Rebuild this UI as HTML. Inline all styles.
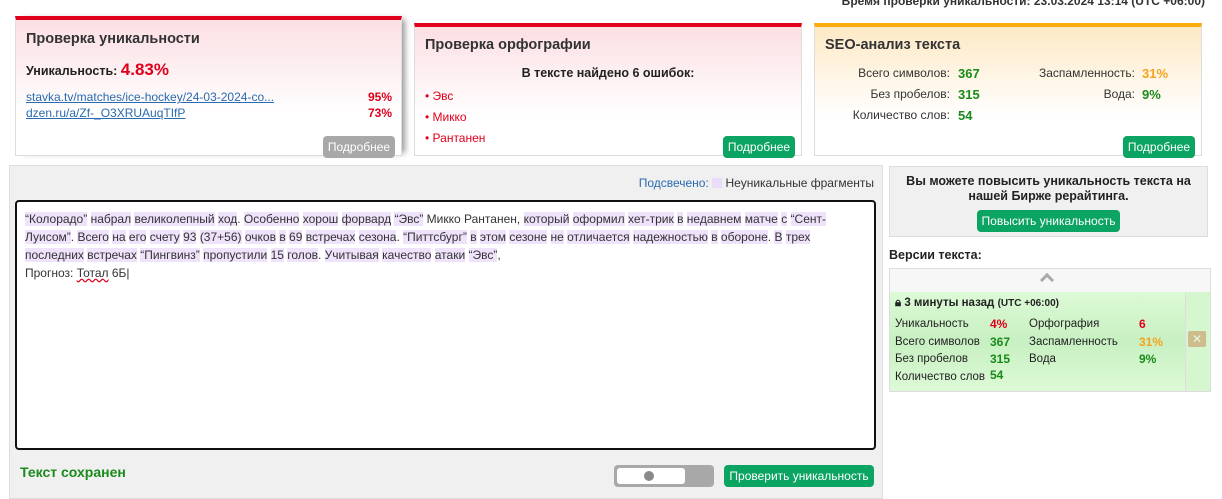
<!DOCTYPE html>
<html><head><meta charset="utf-8"><style>
*{box-sizing:border-box;margin:0;padding:0}
body{width:1222px;height:499px;overflow:hidden;background:#fff;font-family:"Liberation Sans","DejaVu Sans",sans-serif;font-size:12px;color:#222;position:relative}
.abs{position:absolute}
.card{position:absolute;border:1px solid #ddd;border-top:none}
.card h3{position:absolute;left:10px;font-size:14.5px;font-weight:bold;color:#333}
.btn{position:absolute;background:#0ba462;color:#fff;border-radius:4px;font-size:12px;text-align:center;line-height:22px}
.red{color:#e0001b}.grn{color:#1a8a1a;font-weight:bold}.org{color:#f5a31f;font-weight:bold}
.hl{background:#efe2fb}
a{color:#2a6ab0}
</style></head><body>
<div class="abs" style="right:17px;top:-6px;font-weight:bold;font-size:12px;color:#333">Время проверки уникальности: 23.03.2024 13:14 (UTC +06:00)</div>

<div class="card" style="left:15px;top:16px;width:387px;height:140px;border-top:4px solid #e0001b;background:linear-gradient(#fbdfe3,#fff 70%);box-shadow:6px 0 6px -3px #999">
 <h3 style="top:11px">Проверка уникальности</h3>
 <div class="abs" style="left:10px;top:40px;font-weight:bold;font-size:12.5px">Уникальность: <span class="red" style="font-size:17px">4.83%</span></div>
 <a class="abs" style="left:10px;top:70px;text-decoration:underline">stavka.tv/matches/ice-hockey/24-03-2024-co...</a>
 <a class="abs" style="left:10px;top:86px;text-decoration:underline">dzen.ru/a/Zf-_O3XRUAuqTIfP</a>
 <div class="abs red" style="right:9px;top:70px;font-weight:bold">95%</div>
 <div class="abs red" style="right:9px;top:86px;font-weight:bold">73%</div>
 <div class="btn" style="left:307px;top:116px;width:72px;background:#a8a8a8">Подробнее</div>
</div>

<div class="card" style="left:414px;top:23px;width:388px;height:133px;border-top:4px solid #e0001b;background:linear-gradient(#fbdfe3,#fff 70%)">
 <h3 style="top:10px">Проверка орфографии</h3>
 <div class="abs" style="left:0;width:100%;text-align:center;top:39px;font-weight:bold;font-size:12.5px">В тексте найдено 6 ошибок:</div>
 <div class="abs red" style="left:10px;top:59px;line-height:21px">• Эвс<br>• Микко<br>• Рантанен</div>
 <div class="btn" style="left:308px;top:109px;width:72px">Подробнее</div>
</div>

<div class="card" style="left:814px;top:23px;width:388px;height:133px;border-top:4px solid #fbab0a;background:linear-gradient(#fde9c5,#fff 70%)">
 <h3 style="top:10px">SEO-анализ текста</h3>
 <div class="abs" style="left:0;width:135px;top:36px;text-align:right;line-height:21px;color:#333">Всего символов:<br>Без пробелов:<br>Количество слов:</div>
 <div class="abs grn" style="left:143px;top:36px;line-height:21px;font-size:13px">367<br>315<br>54</div>
 <div class="abs" style="left:150px;width:170px;top:36px;text-align:right;line-height:21px;color:#333">Заспамленность:<br>Вода:</div>
 <div class="abs" style="left:327px;top:36px;line-height:21px;font-size:13px"><span class="org">31%</span><br><span class="grn">9%</span></div>
 <div class="btn" style="left:308px;top:109px;width:72px">Подробнее</div>
</div>

<div class="abs" style="left:9px;top:165px;width:874px;height:334px;background:#f0f0f0;border:1px solid #ddd"></div>
<div class="abs" style="right:348px;top:176px;color:#2a6ab0">Подсвечено: <span style="display:inline-block;width:10px;height:10px;background:#ecdcfb;vertical-align:-1px"></span> <span style="color:#333">Неуникальные фрагменты</span></div>
<div class="abs" style="left:15px;top:200px;width:861px;height:250px;background:#fff;border:2px solid #111;border-radius:4px"></div>
<div class="abs" style="left:25px;top:210px;width:820px;line-height:18px;color:#333">
<span class="hl">“Колорадо”</span> <span class="hl">набрал</span> <span class="hl">великолепный</span> <span class="hl">ход</span>. <span class="hl">Особенно</span> <span class="hl">хорош</span> <span class="hl">форвард</span> <span class="hl">“Эвс”</span> Микко Рантанен, <span class="hl">который</span> <span class="hl">оформил</span> <span class="hl">хет-трик</span> <span class="hl">в</span> <span class="hl">недавнем</span> <span class="hl">матче</span> <span class="hl">с</span> <span class="hl">“Сент-</span><br><span class="hl">Луисом”</span>. <span class="hl">Всего</span> <span class="hl">на</span> <span class="hl">его</span> <span class="hl">счету</span> <span class="hl">93</span> <span class="hl">(37+56)</span> <span class="hl">очков</span> <span class="hl">в</span> <span class="hl">69</span> <span class="hl">встречах</span> <span class="hl">сезона</span>. <span class="hl">“Питтсбург”</span> <span class="hl">в</span> <span class="hl">этом</span> <span class="hl">сезоне</span> <span class="hl">не</span> <span class="hl">отличается</span> <span class="hl">надежностью</span> <span class="hl">в</span> <span class="hl">обороне</span>. <span class="hl">В</span> <span class="hl">трех</span><br><span class="hl">последних</span> <span class="hl">встречах</span> <span class="hl">“Пингвинз”</span> <span class="hl">пропустили</span> <span class="hl">15</span> <span class="hl">голов</span>. <span class="hl">Учитывая</span> <span class="hl">качество</span> <span class="hl">атаки</span> <span class="hl">“Эвс”</span>,<br>Прогноз: <span style="text-decoration:underline wavy #e0001b">Тотал</span> 6Б|
</div>
<div class="abs" style="left:20px;top:464px;font-weight:bold;font-size:14px;color:#1a8a1a">Текст сохранен</div>
<div class="abs" style="left:614px;top:465px;width:100px;height:22px;border-radius:4px;background:#a8a8a8"><div class="abs" style="left:3px;top:3px;width:68px;height:16px;background:#fff;border-radius:3px"></div><div class="abs" style="left:30px;top:6px;width:10px;height:10px;border-radius:50%;background:#8a8a8a"></div></div>
<div class="btn" style="left:724px;top:465px;width:150px">Проверить уникальность</div>

<div class="abs" style="left:889px;top:166px;width:319px;height:71px;background:#f0f0f0;border:1px solid #ddd;text-align:center;font-weight:bold;font-size:12.5px;padding-top:7px;line-height:15px">Вы можете повысить уникальность текста на<br>нашей Бирже рерайтинга.</div>
<div class="btn" style="left:977px;top:210px;width:143px">Повысить уникальность</div>
<div class="abs" style="left:889px;top:248px;font-weight:bold;font-size:12.5px">Версии текста:</div>
<div class="abs" style="left:889px;top:268px;width:322px;height:124px;border:1px solid #ddd;background:#f7f7f7"></div>
<div class="abs" style="left:1042px;top:275px;width:10px;height:10px;border-left:3px solid #aaa;border-top:3px solid #aaa;transform:rotate(45deg)"></div>
<div class="abs" style="left:890px;top:292px;width:295px;height:99px;background:linear-gradient(#dcfad6,#c8f0c2 50%,#dcfad6)"></div>
<div class="abs" style="left:1185px;top:292px;width:25px;height:99px;background:#d6f6d0;border-left:1px solid #ddd"></div>
<div class="abs" style="left:1188px;top:331px;width:18px;height:16px;background:#cdbd8c;border-radius:2px;color:#e8f6e0;font-size:12px;text-align:center;line-height:16px;font-weight:bold">✕</div>
<div class="abs" style="left:895px;top:297px;font-weight:bold;font-size:11.5px">🔒︎ 3 минуты назад <span style="font-size:10px">(UTC +06:00)</span></div>
<div class="abs" style="left:895px;top:316px;line-height:17.5px;font-size:11.5px">Уникальность<br>Всего символов<br>Без пробелов<br>Количество слов</div>
<div class="abs" style="left:990px;top:316px;line-height:17.5px;font-size:12px;font-weight:bold"><span class="red">4%</span><br><span class="grn">367</span><br><span class="grn">315</span></div>
<div class="abs grn" style="left:990px;top:368px;font-size:12px">54</div>
<div class="abs" style="left:1029px;top:316px;line-height:17.5px;font-size:11.5px">Орфография<br>Заспамленность<br>Вода</div>
<div class="abs" style="left:1139px;top:316px;line-height:17.5px;font-size:12px;font-weight:bold"><span class="red">6</span><br><span class="org">31%</span><br><span class="grn">9%</span></div>
</body></html>
